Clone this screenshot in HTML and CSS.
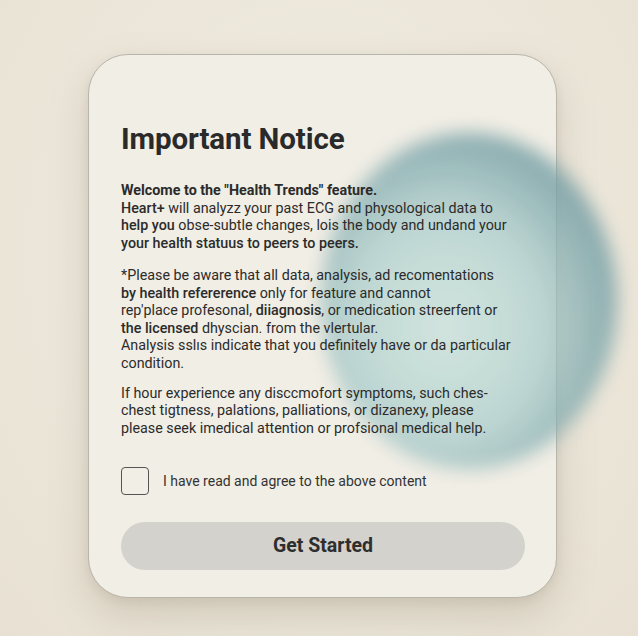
FILE: index.html
```html
<!DOCTYPE html>
<html>
<head>
<meta charset="utf-8">
<link rel="stylesheet" href="styles.css">
</head>
<body>
<div class="stage">
  <div class="card">
    <div class="blob"></div>
    <h1 class="title">Important Notice</h1>
    <div class="text">
      <p class="para p1">
        <span class="line b">Welcome to the "Health Trends" feature.</span>
        <span class="line"><span class="m">Heart+</span> will analyzz your past ECG and physological data to</span>
        <span class="line"><span class="m">help you</span> obse-subtle changes, lois the body and undand your</span>
        <span class="line"><span class="m">your health statuus to peers to peers.</span></span>
      </p>
      <p class="para p2">
        <span class="line">*Please be aware that all data, analysis, ad recomentations</span>
        <span class="line"><span class="m">by health refererence</span> only for feature and cannot</span>
        <span class="line">rep'place profesonal, <span class="m">diiagnosis</span>, or medication streerfent or</span>
        <span class="line"><span class="m">the licensed</span> dhyscian. from the vlertular.</span>
        <span class="line">Analysis sslıs indicate that you definitely have or da particular</span>
        <span class="line">condition.</span>
      </p>
      <p class="para">
        <span class="line">If hour experience any disccmofort symptoms, such ches-</span>
        <span class="line">chest tigtness, palations, palliations, or dizanexy, please</span>
        <span class="line">please seek imedical attention or profsional medical help.</span>
      </p>
    </div>
    <label class="agree"><span class="box"></span><span class="agree-text">I have read and agree to the above content</span></label>
    <button class="cta">Get Started</button>
  </div>
</div>
</body>
</html>
```
FILE: styles.css
```css
html, body {
  margin: 0;
  padding: 0;
}
body {
  width: 638px;
  height: 636px;
  overflow: hidden;
  background: radial-gradient(ellipse at 50% 40%, #f1ede3 0%, #ebe5d8 70%, #e8e1d3 100%);
  font-family: Roboto, "Noto Sans", sans-serif;
}
.stage {
  width: 638px;
  height: 636px;
  padding-top: 54px;
  box-sizing: border-box;
}
.card {
  position: relative;
  margin-left: 88px;
  width: 469px;
  height: 544px;
  box-sizing: border-box;
  border: 1px solid #b9b5ac;
  border-radius: 40px;
  background: #f1eee5;
  box-shadow: 0 18px 40px rgba(120, 105, 80, 0.22), 0 4px 10px rgba(120, 105, 80, 0.12);
  padding: 68px 32px 0 32px;
  display: flex;
  flex-direction: column;
}
.card > .title,
.card > .text,
.card > .agree,
.card > .cta {
  position: relative;
  z-index: 1;
}
.title {
  margin: 0;
  font-size: 29.5px;
  font-weight: 700;
  color: #2a2a2a;
  line-height: 32px;
  letter-spacing: -0.1px;
}
.text {
  margin-top: 27px;
  color: #2b2b2b;
  font-size: 14.3px;
  line-height: 17.5px;
}
.para {
  margin: 0 0 12.5px 0;
}
.p1 {
  margin-bottom: 15px;
}
.line {
  display: block;
  white-space: nowrap;
}
.b { font-weight: 700; }
.m { font-weight: 500; }
.agree {
  margin-top: 17px;
  display: flex;
  align-items: center;
  gap: 14px;
}
.box {
  width: 26px;
  height: 26px;
  border: 1.3px solid #555;
  border-radius: 4px;
  flex: none;
}
.agree-text {
  font-size: 14px;
  color: #333;
}
.cta {
  margin-top: 27px;
  height: 48px;
  width: 404px;
  border: none;
  border-radius: 24px;
  background: #d3d2cd;
  font-family: Roboto, "Noto Sans", sans-serif;
  font-size: 19.5px;
  font-weight: 700;
  color: #2e2e2e;
}
.blob {
  position: absolute;
  left: 232px;
  top: 78px;
  width: 296px;
  height: 336px;
  border-radius: 50%;
  background: radial-gradient(ellipse at 42% 58%, rgba(188, 222, 218, 0.6) 0%, rgba(160, 200, 200, 0.64) 40%, rgba(112, 155, 162, 0.8) 72%, rgba(125, 165, 168, 0.4) 88%, rgba(160, 190, 185, 0) 100%);
  filter: blur(9px);
  pointer-events: none;
  z-index: 0;
}
```
